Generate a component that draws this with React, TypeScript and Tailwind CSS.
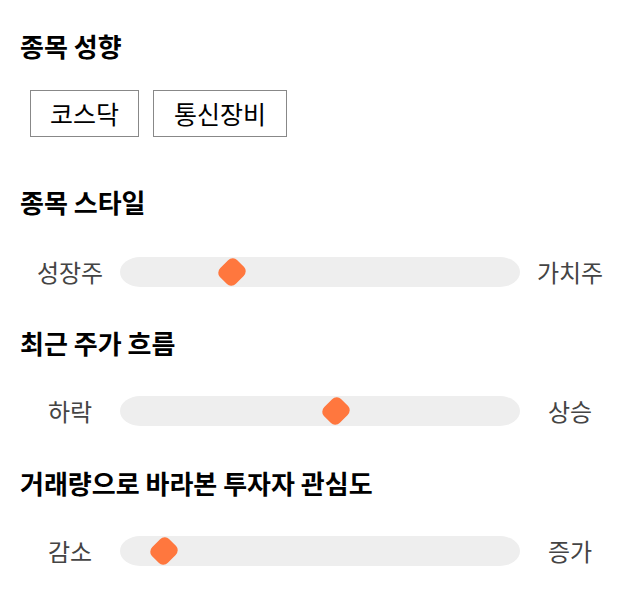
import React from 'react';

const font = { fontFamily: '"Noto Sans CJK KR", "Noto Sans", sans-serif' };

function Slider({ left, right, value }: { left: string; right: string; value: number }) {
  return (
    <div className="flex items-center h-[30px]">
      <div className="w-[100px] text-center text-[24px] leading-[30px] text-[#444]">{left}</div>
      <div className="relative flex-1 h-[30px] bg-[#eeeeee] rounded-[20px/15px]">
        <div
          className="absolute top-[4px] w-[22px] h-[22px] -ml-[11px] bg-[#ff773e] rounded-[6px] rotate-45 scale-y-110"
          style={{ left: `${value}%` }}
        />
      </div>
      <div className="w-[100px] text-center text-[24px] leading-[30px] text-[#444]">{right}</div>
    </div>
  );
}

export default function App() {
  return (
    <div className="bg-white w-[640px] h-[606px] px-5 pt-[31px] text-black" style={font}>
      <h2 className="text-[26px] font-bold leading-[30px]">종목 성향</h2>
      <div className="flex gap-[14px] pl-[10px] mt-[29px]">
        <span className="border border-[#888] px-[19px] h-[47px] flex items-center text-[25px]">코스닥</span>
        <span className="border border-[#888] px-[20px] h-[47px] flex items-center text-[25px]">통신장비</span>
      </div>

      <h2 className="text-[26px] font-bold leading-[30px] mt-[50px]">종목 스타일</h2>
      <div className="mt-[40px]">
        <Slider left="성장주" right="가치주" value={28} />
      </div>

      <h2 className="text-[26px] font-bold leading-[30px] mt-[41px]">최근 주가 흐름</h2>
      <div className="mt-[38px]">
        <Slider left="하락" right="상승" value={54} />
      </div>

      <h2 className="text-[26px] font-bold leading-[30px] mt-[42px]">거래량으로 바라본 투자자 관심도</h2>
      <div className="mt-[38px]">
        <Slider left="감소" right="증가" value={11} />
      </div>
    </div>
  );
}
